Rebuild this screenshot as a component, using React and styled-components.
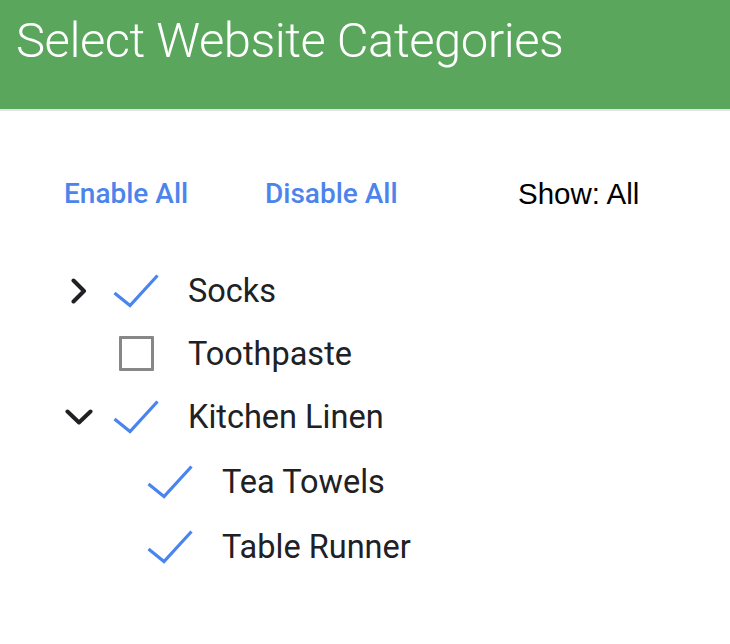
import React from "react";
import styled, { createGlobalStyle } from "styled-components";

const GlobalStyle = createGlobalStyle`
  html, body { margin: 0; padding: 0; background: #ffffff; }
  body { font-family: Roboto, "Noto Sans", sans-serif; }
`;

const Header = styled.header`
  background: #5aa65c;
  border-bottom: 2px solid #e4e4e4;
  padding: 15px 0 0 16px;
  box-sizing: content-box;
  height: 94px;
`;

const Title = styled.h1`
  margin: 0;
  font-family: Roboto, sans-serif;
  font-weight: 300;
  font-size: 49px;
  line-height: 51px;
  color: #ffffff;
  letter-spacing: -0.5px;
`;

const Toolbar = styled.div`
  display: grid;
  grid-template-columns: 201px 254px auto;
  align-items: center;
  height: 40px;
  margin-top: 63px;
  padding-left: 64px;
`;

const LinkButton = styled.button`
  all: unset;
  cursor: pointer;
  font-family: Roboto, sans-serif;
  font-weight: 500;
  font-size: 28px;
  line-height: 40px;
  color: #4c84ec;
  white-space: nowrap;
`;

const ShowLabel = styled.span`
  font-family: "Liberation Sans", Arial, sans-serif;
  font-size: 29.5px;
  line-height: 40px;
  color: #000000;
  margin-left: -1px;
`;

const Tree = styled.ul`
  list-style: none;
  margin: 44px 0 0;
  padding: 0;
`;

const Row = styled.li`
  display: flex;
  align-items: center;
  height: ${(p) => p.$height}px;
  padding-left: ${(p) => 59 + p.$depth * 34}px;
`;

const ExpanderSlot = styled.span`
  width: 40px;
  height: 40px;
  display: flex;
  align-items: center;
  justify-content: center;
  flex: none;
`;

const CheckSlot = styled.span`
  width: 48px;
  height: 40px;
  margin-left: 13px;
  display: flex;
  align-items: center;
  justify-content: center;
  flex: none;
`;

const EmptyBox = styled.span`
  width: 29px;
  height: 29px;
  border: 3px solid #878787;
  border-radius: 1px;
  box-sizing: content-box;
`;

const Label = styled.span`
  margin-left: 28px;
  font-family: Roboto, sans-serif;
  font-size: 32.5px;
  line-height: 32px;
  color: #202124;
  white-space: nowrap;
`;

const ChevronRight = () => (
  <svg width="16" height="26" viewBox="0 0 16 26" fill="none">
    <path d="M2.5 2.5 L13 13 L2.5 23.5" stroke="#202124" strokeWidth="4" strokeLinecap="round" strokeLinejoin="round" />
  </svg>
);

const ChevronDown = () => (
  <svg width="28" height="16" viewBox="0 0 28 16" fill="none">
    <path d="M2.5 2.5 L14 13.5 L25.5 2.5" stroke="#202124" strokeWidth="4" strokeLinecap="round" strokeLinejoin="round" />
  </svg>
);

const CheckMark = () => (
  <svg width="46" height="34" viewBox="0 0 46 34" fill="none">
    <path d="M1.5 19 L17 31.5 L44.5 1.5" stroke="#4a84ef" strokeWidth="3.2" strokeLinejoin="miter" />
  </svg>
);

const items = [
  { label: "Socks", depth: 0, expander: "right", checked: true, height: 65 },
  { label: "Toothpaste", depth: 0, expander: null, checked: false, height: 61 },
  { label: "Kitchen Linen", depth: 0, expander: "down", checked: true, height: 65 },
  { label: "Tea Towels", depth: 1, expander: null, checked: true, height: 65 },
  { label: "Table Runner", depth: 1, expander: null, checked: true, height: 65 },
];

export default function App() {
  return (
    <>
      <GlobalStyle />
      <Header>
        <Title>Select Website Categories</Title>
      </Header>
      <Toolbar>
        <LinkButton>Enable All</LinkButton>
        <LinkButton>Disable All</LinkButton>
        <ShowLabel>Show: All</ShowLabel>
      </Toolbar>
      <Tree>
        {items.map((it) => (
          <Row key={it.label} $depth={it.depth} $height={it.height}>
            <ExpanderSlot>
              {it.expander === "right" && <ChevronRight />}
              {it.expander === "down" && <ChevronDown />}
            </ExpanderSlot>
            <CheckSlot>{it.checked ? <CheckMark /> : <EmptyBox />}</CheckSlot>
            <Label>{it.label}</Label>
          </Row>
        ))}
      </Tree>
    </>
  );
}
